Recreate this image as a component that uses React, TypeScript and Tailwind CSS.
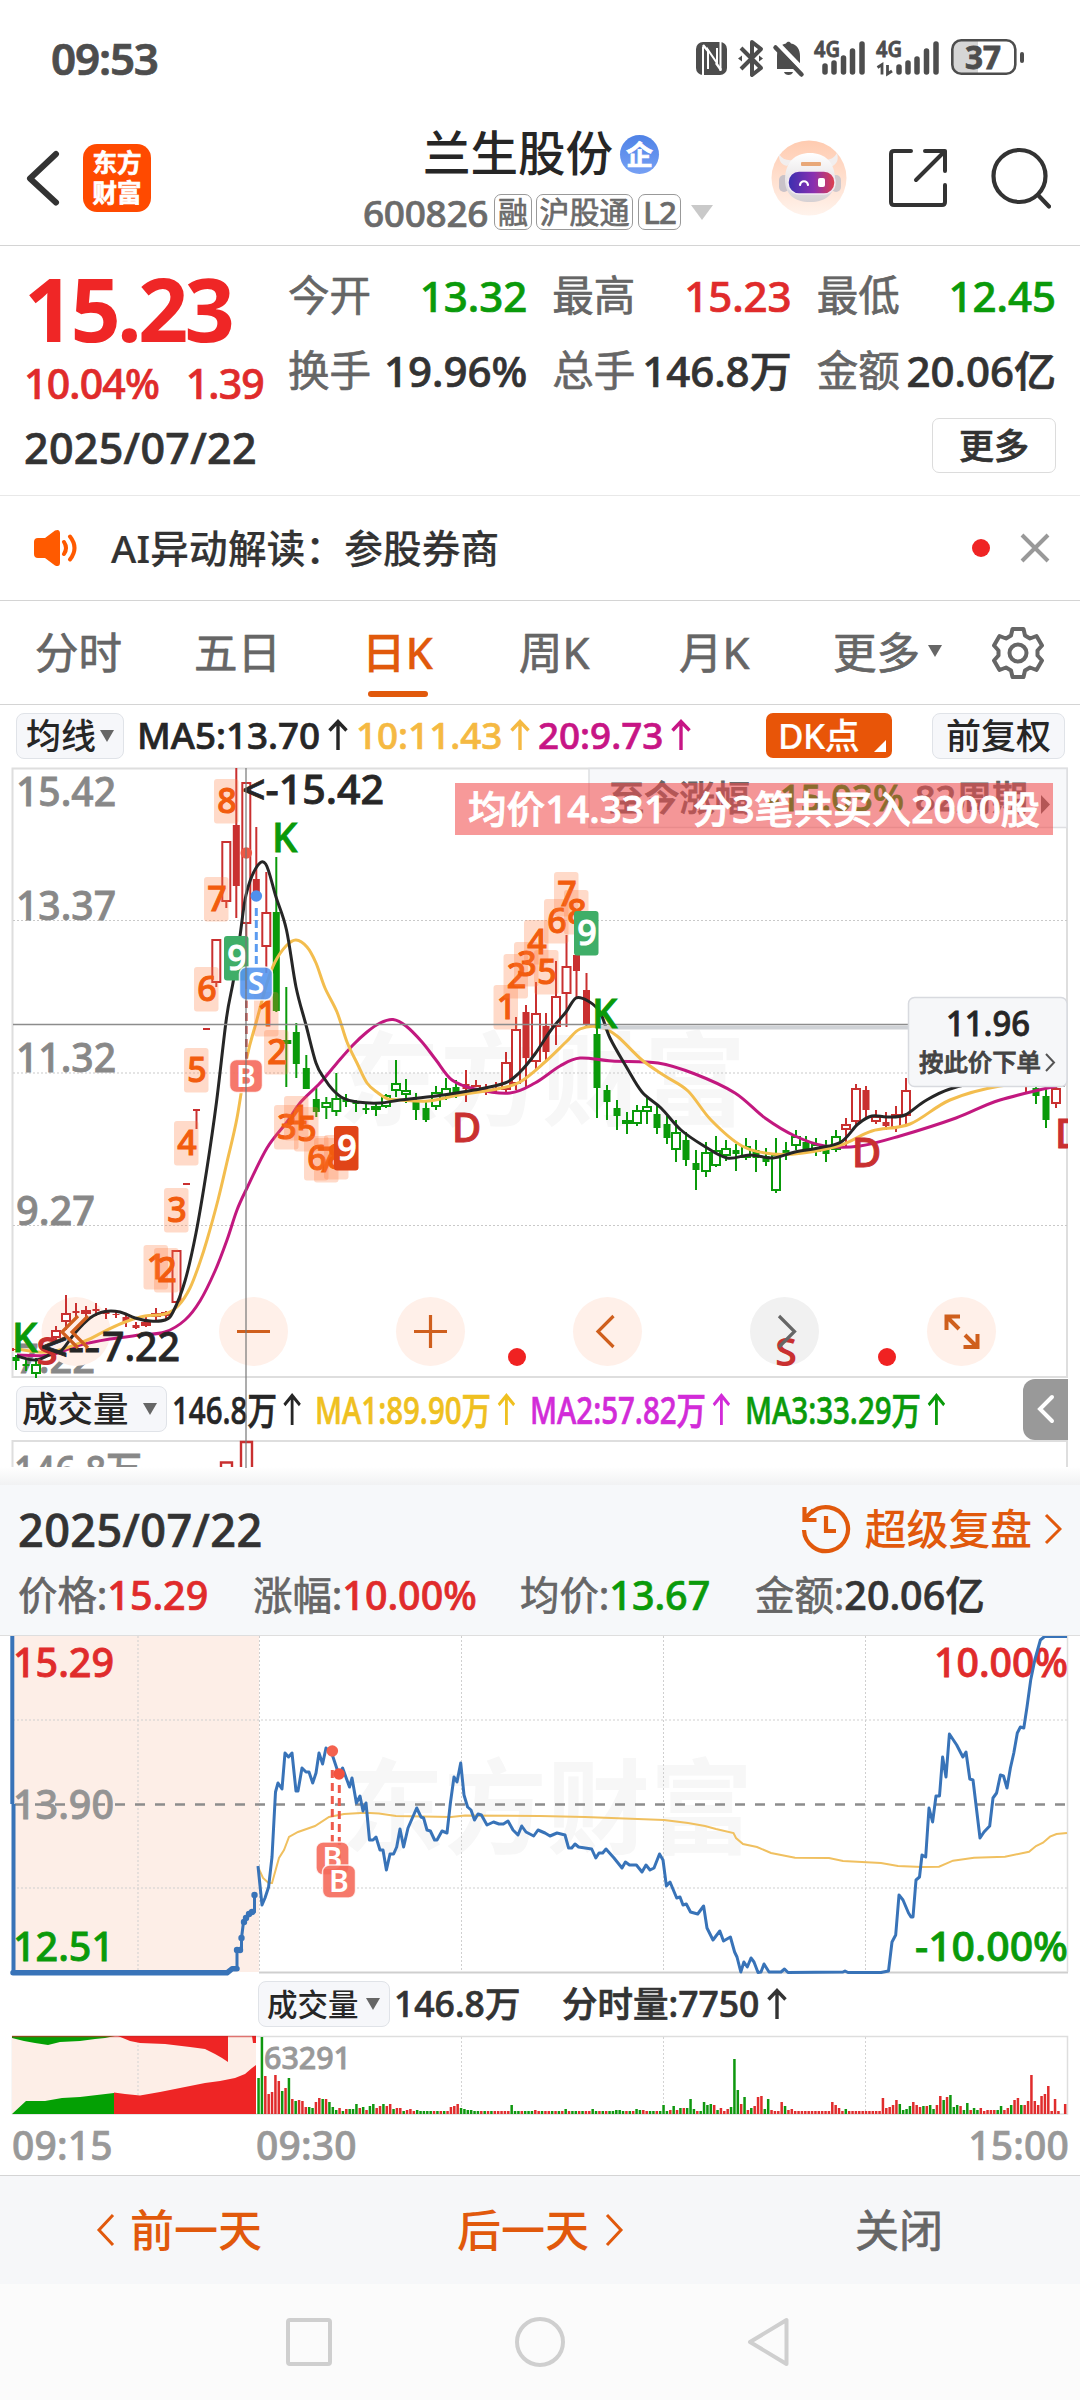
import React from "react";

const RED = "#e02b2b";
const GREEN = "#0a9a0a";
const UP = "#c93030";
const ORANGE = "#e1590c";
const SANS = '"Noto Sans","Noto Sans CJK SC",sans-serif';

type Pt = [number, number];
const path = (pts: Pt[]) => "M" + pts.map((p) => p.join(" ")).join("L");

/* smooth curve through points */
const curve = (p: Pt[]) => {
  let d = `M${p[0][0]} ${p[0][1]}`;
  for (let i = 0; i < p.length - 1; i++) {
    const a = p[i - 1] || p[i], b = p[i], c = p[i + 1], e = p[i + 2] || c;
    d += `C${b[0] + (c[0] - a[0]) / 6} ${b[1] + (c[1] - a[1]) / 6} ${c[0] - (e[0] - b[0]) / 6} ${c[1] - (e[1] - b[1]) / 6} ${c[0]} ${c[1]}`;
  }
  return d;
};

function Txt({ x, y, w, s, fill, children, weight = 500 }: { x: number; y: number; w?: number; s: number; fill: string; children: string; weight?: number }) {
  return (
    <text x={x} y={y} fontSize={s} fill={fill} stroke={fill} strokeWidth="0.800" fontWeight={weight} fontFamily={SANS} textLength={w} lengthAdjust="spacingAndGlyphs" style={{ whiteSpace: "pre" }}>
      {children}
    </text>
  );
}

function Up() {
  return (
    <svg viewBox="0 0 20 32" className="ml-2 h-8 w-5 shrink-0" fill="none" stroke="currentColor" strokeWidth="3.400">
      <path d="M10 31V2M1.500 11.500 10 2.500l8.500 9" />
    </svg>
  );
}

function Caret({ className }: { className?: string }) {
  return (
    <svg viewBox="0 0 14 12" className={"h-3 w-3.5 shrink-0 " + (className || "")}>
      <path d="M0 0h14L7 12z" fill="#666" />
    </svg>
  );
}

function StatusBar() {
  return (
    <div className="flex h-[116px] items-center pr-[50px] pl-[51px] text-[#4d4d4d]">
      <div className="text-[44px] leading-none font-semibold tracking-[-1.200px]">09:53</div>
      <svg viewBox="690 34 340 46" className="ml-auto h-[46px] w-[340px]">
        <rect x="696" y="41" width="31" height="33" rx="7" fill="#4d4d4d" />
        <path d="M703 74V45.500M720.500 70V41M708 68V49l9 13V47" stroke="#fff" strokeWidth="2" fill="none" />
        <path d="M703 44l5 6M716 62l5 7" stroke="#fff" strokeWidth="2.500" />
        <path d="M741 47l20 20-9 7V41l9 7-20 20" fill="none" stroke="#4d4d4d" strokeWidth="4" strokeLinejoin="round" />
        <path d="M738 57.500l4-3v6zM763 57.500l-4-3v6z" fill="#4d4d4d" />
        <path d="M777 66V55c0-7 4-12 9-12.500 1-2.500 4-2.500 5 0 6 1 9 6 9 12.500v8l3 5h-26z" fill="#4d4d4d" />
        <path d="M784 71h9c-1 4-8 4-9 0z" fill="#4d4d4d" />
        <path d="M777 42l28 29" stroke="#fff" strokeWidth="5" />
        <path d="M775.500 46.500l26 27" stroke="#4d4d4d" strokeWidth="4.500" strokeLinecap="round" />
        <Txt x={814} y={56} w={26} s={21} fill="#4d4d4d" weight={600}>4G</Txt>
        <Txt x={876} y={56} w={26} s={21} fill="#4d4d4d" weight={600}>4G</Txt>
        <g stroke="#4d4d4d" strokeWidth="5.500" strokeLinecap="round">
          <path d="M825 65v6M834 62v9M843.500 57v14M852.500 50v21M862 43v28" />
          <path d="M899 66v5M908 62v9M917 58v13M926.500 50v21M936 43v28" />
        </g>
        <path d="M877.500 66.500l4.500-3v10M892 70l-4.500 3V64" fill="none" stroke="#4d4d4d" strokeWidth="2.800" />
        <path d="M978 40h-16q-9 0-9 9v14q0 9 9 9h16z" fill="#d6d6d6" />
        <rect x="952.300" y="39.300" width="63" height="33.500" rx="9" fill="none" stroke="#4d4d4d" strokeWidth="2.600" />
        <rect x="1020" y="51" width="4" height="11" rx="2" fill="#4d4d4d" />
        <Txt x={965} y={68} w={36} s={32} fill="#4d4d4d" weight={700}>37</Txt>
      </svg>
    </div>
  );
}

function Robot() {
  return (
    <svg viewBox="0 0 76 76" className="h-[76px] w-[76px]">
      <defs>
        <linearGradient id="bgp" x1="0" y1="0" x2="0" y2="1"><stop offset="0" stopColor="#ffcbb0" /><stop offset="1" stopColor="#fff3ec" /></linearGradient>
        <linearGradient id="visor" x1="0" y1="0" x2="1" y2="0"><stop offset="0" stopColor="#3a2fb0" /><stop offset=".55" stopColor="#8a2fb0" /><stop offset="1" stopColor="#e0404c" /></linearGradient>
        <linearGradient id="shell" x1="0" y1="0" x2="0" y2="1"><stop offset="0" stopColor="#fff" /><stop offset="1" stopColor="#d5d0d3" /></linearGradient>
      </defs>
      <circle cx="38" cy="38" r="37.500" fill="url(#bgp)" />
      <path d="M8 14c0 6 1 10 8 12l6-6c-6 1-11-1-14-6zM66 13c2 7 0 11-6 14l-6-7c5 0 9-2 12-7z" fill="#f2eeee" />
      <rect x="8" y="35" width="10" height="17" rx="5" fill="#c9c2c8" />
      <rect x="60" y="35" width="10" height="17" rx="5" fill="#cfc8cc" />
      <path d="M14 40c0-18 10-27 25-27s25 9 25 27c0 14-9 22-25 22s-25-8-25-22z" fill="url(#shell)" />
      <rect x="17" y="31" width="47" height="23" rx="11" fill="url(#visor)" stroke="#f2e9f2" strokeWidth="1.500" />
      <path d="M29 45c1-5 7-5 8 0" fill="none" stroke="#fff" strokeWidth="2.200" strokeLinecap="round" />
      <rect x="47" y="38" width="7" height="9" rx="2" fill="#fff" />
      <rect x="30" y="22" width="20" height="4" rx="1" fill="#e8a878" />
    </svg>
  );
}

function Header() {
  return (
    <div className="relative flex h-[130px] items-start border-b border-[#d4d4d4] text-[#262626]">
      <svg viewBox="0 0 34 58" className="mt-[33px] ml-[26px] h-[58px] w-[34px]">
        <path d="M30 5 4 29.500l26 24" fill="none" stroke="#333" strokeWidth="6" strokeLinecap="round" strokeLinejoin="round" />
      </svg>
      <div className="mt-7 ml-[23px] flex h-[68px] w-[68px] flex-col items-center justify-center rounded-[14px] bg-[#ff4a00] text-[24.500px] leading-[30px] font-bold text-white">
        <span>东方</span>
        <span>财富</span>
      </div>
      <div className="absolute left-[362px] flex flex-col items-start">
        <div className="ml-[61px] flex h-[68px] items-center pt-[5px]">
          <span className="text-[47.500px] leading-none font-medium [-webkit-text-stroke:0px]">兰生股份</span>
          <span className="mt-1 ml-[7px] flex size-[39px] items-center justify-center rounded-full bg-linear-to-b from-[#4f82e6] to-[#76a0f4] text-[27px] leading-none font-bold text-white">企</span>
        </div>
        <div className="mt-[10px] flex h-9 items-center pl-px text-[#6b6b6b]">
          <span className="w-[131px] text-[37px] leading-none font-medium tracking-[-0.300px]">600826</span>
          <span className="flex h-9 w-[38px] items-center justify-center rounded-[7px] border border-[#999] text-[30px] leading-none">融</span>
          <span className="ml-1 flex h-9 w-[97px] items-center justify-center rounded-[7px] border border-[#999] text-[30px] leading-none">沪股通</span>
          <span className="ml-[5px] flex h-9 w-[43px] items-center justify-center rounded-[7px] border border-[#999] text-[31px] leading-none font-medium tracking-[-1px]">L2</span>
          <svg viewBox="0 0 22 15" className="ml-[10px] h-[15px] w-[22px]"><path d="M0 0h22L11 15z" fill="#c9c9c9" /></svg>
        </div>
      </div>
      <div className="mt-6 mr-[29px] ml-auto flex h-[76px] items-center">
        <Robot />
        <svg viewBox="0 0 60 60" className="ml-[41px] h-[60px] w-[60px]" fill="none" stroke="#333" strokeWidth="4" strokeLinecap="round" strokeLinejoin="round">
          <path d="M23 3H6Q3 3 3 6v48q0 3 3 3h48q3 0 3-3V37M37 3h20v20M57 3 28 32" />
        </svg>
        <svg viewBox="0 0 60 62" className="ml-[43px] h-[62px] w-[60px]" fill="none" stroke="#333" strokeWidth="4.200" strokeLinecap="round">
          <circle cx="28.500" cy="29" r="26" />
          <path d="M47 48l11 11.500" />
        </svg>
      </div>
    </div>
  );
}

function Cell({ k, v, c = "text-[#333]" }: { k: string; v: string; c?: string }) {
  return (
    <div className="flex h-[50px] items-center justify-between leading-none">
      <span className="text-[41.500px] font-normal text-[#666]">{k}</span>
      <span className={"text-[42px] font-medium " + c}>{v}</span>
    </div>
  );
}

function Quote() {
  return (
    <div className="h-[250px] border-b border-[#e8e8e8] pt-[24px] pr-[24px] pl-[24px]">
      <div className="flex">
        <div className="w-[264px] shrink-0">
          <div className="flex h-[76px] items-center text-[88px] leading-none font-bold tracking-[-3.800px] text-[#ef2626] [-webkit-text-stroke:0px]">15.23</div>
          <div className="flex h-[74px] items-center justify-between pr-[24px] text-[41px] leading-none font-medium tracking-[-0.800px] text-[#e02b2b]">
            <span>10.04%</span>
            <span>1.39</span>
          </div>
        </div>
        <div className="grid flex-1 grid-cols-3 content-start gap-x-[25px] gap-y-[25px] pt-px">
          <Cell k="今开" v="13.32" c="text-[#0a9a0a]" />
          <Cell k="最高" v="15.23" c="text-[#e02b2b]" />
          <Cell k="最低" v="12.45" c="text-[#0a9a0a]" />
          <Cell k="换手" v="19.96%" />
          <Cell k="总手" v="146.8万" />
          <Cell k="金额" v="20.06亿" />
        </div>
      </div>
      <div className="flex h-[54px] items-center justify-between">
        <span className="text-[43px] leading-none font-medium tracking-[0.300px] text-[#333]">2025/07/22</span>
        <span className="mt-[-4px] flex h-[55px] w-[124px] items-center justify-center rounded-[7px] border border-[#dcdcdc] text-[35px] leading-none font-medium text-[#333]">更多</span>
      </div>
    </div>
  );
}

function Notice() {
  return (
    <div className="flex h-[105px] items-center border-b border-[#d4d4d4] pr-[30px] pl-[33px]">
      <svg viewBox="0 0 46 38" className="h-[38px] w-[46px]">
        <path d="M5 9h7L22 1.500q5-2 5 3v29q0 5-5 3L12 29H5q-4 0-4-4V13q0-4 4-4z" fill="#ff5a00" />
        <path d="M31 13q4 6 0 12M37 7.500q9 11.500 0 23" fill="none" stroke="#ff5a00" strokeWidth="4" strokeLinecap="round" />
      </svg>
      <span className="ml-8 text-[38.600px] leading-none font-medium tracking-[0.200px] text-[#333] [-webkit-text-stroke:0.200px]">AI异动解读：参股券商</span>
      <span className="ml-auto size-[18px] rounded-full bg-[#ef2424]" />
      <svg viewBox="0 0 30 30" className="ml-[30px] h-[30px] w-[30px]"><path d="M2 2l26 26M28 2 2 28" stroke="#999" strokeWidth="4" /></svg>
    </div>
  );
}

function Tabs() {
  return (
    <div className="relative flex h-[104px] items-center border-b border-[#d4d4d4] text-[43.500px] leading-none text-[#666]">
      <span className="ml-[35px] w-[159px]">分时</span>
      <span className="w-[168px]">五日</span>
      <span className="w-[157px] font-medium text-[#e1590c] [-webkit-text-stroke:0.300px]">日K</span>
      <span className="w-[160px]">周K</span>
      <span className="w-[154px]">月K</span>
      <span>更多</span>
      <Caret className="-mt-1 ml-[8px]" />
      <svg viewBox="0 0 54 54" className="ml-[49px] h-[54px] w-[54px]" fill="none" stroke="#666" strokeWidth="4" strokeLinejoin="round">
        <path d="M21.500 3h11l1.500 6.500 5 3 6.500-2.500 5.500 9.500-4.500 5v5l4.500 5-5.500 9.500L39 41.500l-5 3L32.500 51h-11L20 44.500l-5-3L8.500 44 3 34.500l4.500-5v-5L3 19.500 8.500 10l6.500 2.500 5-3z" />
        <circle cx="27" cy="27" r="8.500" />
      </svg>
      <span className="absolute bottom-[7px] left-[368px] h-[6px] w-[60px] rounded-full bg-[#e1590c]" />
    </div>
  );
}

function IndicatorRow() {
  return (
    <div className="flex h-[61px] items-center pl-4 text-[36.800px] leading-none font-medium text-[#262626]">
      <span className="flex h-[46px] w-[108px] items-center rounded-[8px] border border-[#e0e3e8] bg-[#f6f7fa] pl-[9px] text-[35px] [-webkit-text-stroke:0px]">
        均线<Caret className="ml-[4px]" />
      </span>
      <span className="ml-[13px] flex w-[219px] items-center">MA5:13.70<Up /></span>
      <span className="flex w-[182px] items-center text-[#f5b942]">10:11.43<Up /></span>
      <span className="flex w-[228px] items-center text-[#c71585]">20:9.73<Up /></span>
      <span className="relative flex h-[45px] w-[126px] items-center rounded-[7px] bg-[#e85508] pl-[12px] text-[35px] tracking-[-0.500px] text-white [-webkit-text-stroke:0.200px]">
        DK点
        <svg viewBox="0 0 12 12" className="absolute right-[6px] bottom-[6px] size-3"><path d="M12 0v12H0z" fill="#fff" /></svg>
      </span>
      <span className="ml-[40px] flex h-[46px] w-[133px] items-center justify-center rounded-[8px] border border-[#e0e3e8] bg-[#f6f7fa] text-[35px] [-webkit-text-stroke:0px]">前复权</span>
    </div>
  );
}

/* kind: h = hollow, f = filled, colour r / g; [x, high, top, bottom, low, kind] */
type Candle = [number, number, number, number, number, string];
const candles: Candle[] = [
  [13, 1348, 1349, 1350, 1351, "fr"], [16, 1355, 1357, 1361, 1370, "fg"], [26, 1360, 1364, 1366, 1371, "fg"], [36, 1358, 1364, 1374, 1378, "hg"],
  [56, 1326, 1330, 1338, 1342, "hr"], [66, 1295, 1313, 1322, 1330, "hr"], [76, 1303, 1311, 1313, 1318, "fr"], [86, 1306, 1310, 1314, 1320, "hr"],
  [96, 1303, 1309, 1311, 1316, "fr"], [106, 1308, 1312, 1314, 1319, "fr"], [116, 1312, 1314, 1315, 1318, "fr"], [126, 1315, 1317, 1322, 1327, "fr"],
  [136, 1322, 1325, 1328, 1329, "fr"], [146, 1317, 1322, 1326, 1327, "hr"], [156, 1308, 1313, 1317, 1322, "hr"], [166, 1311, 1312, 1316, 1319, "hr"],
  [176.500, 1250, 1250, 1303, 1303, "hr"], [186.500, 1183, 1183, 1185, 1185, "fr"], [196.500, 1109, 1109, 1111, 1129, "fr"], [206.500, 1028, 1028, 1030, 1030, "fr"],
  [216.300, 939, 939, 983, 987, "hr"], [226.300, 841, 841, 902, 908, "hr"], [236.300, 768, 825, 886, 918, "fr"], [246.300, 782, 782, 924, 989, "hr"],
  [256.300, 827, 879, 896, 897, "fr"], [266.300, 872, 912, 947, 973, "hr"], [276.300, 857, 912, 1011, 1012, "fg"], [286.300, 987, 1040, 1044, 1087, "hg"],
  [296.300, 1023, 1032, 1064, 1078, "fg"], [306.300, 1055, 1068, 1089, 1089, "fg"], [316.300, 1088, 1099, 1112, 1117, "fg"], [326.300, 1097, 1102, 1108, 1119, "hg"],
  [336.300, 1073, 1098, 1112, 1116, "hg"], [346, 1094, 1099, 1102, 1107, "fg"], [356, 1100, 1102, 1104, 1112, "fg"], [366, 1104, 1108, 1110, 1114, "fg"],
  [376, 1104, 1106, 1110, 1116, "hg"], [386, 1094, 1095, 1107, 1108, "hg"], [396, 1060, 1083, 1091, 1097, "hg"],
  [406, 1079, 1090, 1095, 1103, "hg"], [416, 1093, 1102, 1110, 1120, "fg"], [426, 1102, 1108, 1120, 1122, "fg"], [436, 1086, 1092, 1107, 1110, "hg"],
  [446, 1078, 1088, 1096, 1100, "hg"], [456, 1080, 1087, 1094, 1098, "fg"], [466, 1070, 1084, 1089, 1102, "fr"], [476, 1080, 1085, 1091, 1093, "hr"],
  [486, 1084, 1089, 1091, 1095, "fr"], [496, 1082, 1088, 1090, 1094, "fr"], [506, 1052, 1062, 1090, 1094, "hr"], [516, 1017, 1029, 1084, 1090, "hr"],
  [526, 1005, 1012, 1058, 1088, "fr"], [536, 982, 1013, 1062, 1070, "hr"], [546, 1013, 1026, 1052, 1060, "fr"], [556, 961, 996, 1027, 1045, "hr"],
  [566.500, 935, 966, 994, 1027, "hr"], [576.500, 950, 955, 971, 998, "fr"], [586.500, 973, 990, 1025, 1026, "fr"], [597, 1028, 1034, 1088, 1118, "fg"],
  [607, 1085, 1090, 1102, 1120, "fg"], [617, 1100, 1108, 1116, 1130, "fg"], [627, 1112, 1120, 1124, 1134, "hg"], [637, 1105, 1110, 1124, 1126, "hg"],
  [647, 1098, 1106, 1112, 1124, "hg"], [657, 1106, 1114, 1128, 1134, "fg"], [667, 1116, 1124, 1138, 1144, "fg"], [676, 1120, 1132, 1150, 1162, "hg"],
  [686, 1132, 1140, 1160, 1166, "fg"], [696, 1150, 1163, 1170, 1190, "fg"], [706, 1142, 1152, 1172, 1177, "hg"], [716, 1136, 1150, 1166, 1167, "hg"],
  [726, 1140, 1148, 1156, 1161, "hg"], [736, 1144, 1150, 1154, 1171, "fg"], [746, 1138, 1146, 1158, 1160, "hg"], [756, 1140, 1150, 1158, 1172, "fg"],
  [766, 1148, 1156, 1162, 1166, "fg"], [776, 1138, 1154, 1191, 1193, "hg"], [786, 1142, 1150, 1153, 1160, "fg"], [796, 1130, 1136, 1146, 1150, "hg"],
  [806, 1136, 1142, 1150, 1154, "fg"], [816, 1138, 1144, 1152, 1156, "hg"], [826, 1140, 1148, 1154, 1162, "fg"], [836, 1130, 1136, 1150, 1152, "hg"],
  [846, 1118, 1124, 1130, 1148, "hr"], [856, 1084, 1088, 1122, 1126, "hr"], [866, 1086, 1090, 1110, 1118, "fr"], [876, 1110, 1116, 1122, 1124, "hr"],
  [886, 1112, 1122, 1126, 1130, "fr"], [896, 1106, 1114, 1128, 1132, "hr"], [906, 1078, 1090, 1116, 1124, "hr"],
  [1026, 1070, 1076, 1084, 1092, "hr"], [1036, 1084, 1088, 1096, 1104, "fg"], [1046, 1082, 1096, 1120, 1128, "fg"], [1056, 1080, 1088, 1104, 1108, "hr"],
];

const tags: [string, number, number, string?][] = [
  ["8", 214, 779], ["7", 204, 877], ["6", 194, 967], ["5", 184, 1048], ["4", 174, 1121], ["3", 164, 1188], ["1", 143.500, 1245], ["2", 154, 1248],
  ["1", 254, 992], ["2", 264, 1030], ["3", 274, 1105], ["4", 284, 1096], ["5", 294, 1107], ["6", 304, 1136], ["7", 314, 1138], ["8", 324, 1135], ["9", 334, 1126, "#e04418"],
  ["1", 493.500, 985], ["2", 503.500, 954], ["3", 514, 942], ["4", 524, 920], ["5", 534, 950], ["6", 544, 899], ["7", 554, 872], ["8", 564, 890], ["9", 574, 911, "#3fae68"],
  ["9", 224, 936, "#3fae68"],
];

const maBlack: Pt[] = [[17, 1356], [36, 1360], [55, 1352], [62, 1350], [75, 1333], [90, 1318], [105, 1311.500], [120, 1312], [135, 1318], [150, 1321], [165, 1320], [173, 1312], [185, 1281], [196, 1233], [206.700, 1170], [216.500, 1102], [226.500, 1018], [233.500, 980], [240, 936], [246, 895], [256, 868], [265.700, 864], [276, 897], [286.500, 930], [296, 987], [306, 1025], [316, 1063], [324, 1078], [333, 1090], [343, 1098], [357, 1102], [380, 1103], [400, 1100], [436, 1096], [474, 1090], [505, 1083], [520, 1072], [535, 1054], [551, 1030], [566, 1012], [576, 998], [588, 1001], [600, 1012], [610, 1038], [627, 1068], [642, 1092], [661, 1108], [681, 1130], [704, 1146], [727, 1158], [750, 1155], [773, 1158], [795, 1152], [818, 1148], [841, 1142], [858, 1124], [872, 1116], [887, 1117], [905, 1115], [925, 1101], [950, 1089], [990, 1080], [1030, 1078], [1065, 1085]];
const maYellow: Pt[] = [[17, 1349], [50, 1352], [85, 1341], [105, 1331], [125, 1322], [145, 1316], [165, 1314], [178, 1306], [190, 1288], [200, 1262], [207, 1240], [218, 1200], [227, 1162], [237, 1118], [247, 1057], [256, 1023], [267, 983], [275, 962], [286, 946], [296, 940], [307, 947], [316, 963], [325, 988], [337, 1012], [347, 1042], [357, 1063], [367, 1083], [378, 1093], [388, 1099], [400, 1100], [428, 1101], [459, 1095], [497, 1089], [520, 1082], [545, 1062], [566, 1042], [580, 1029], [600, 1027], [617, 1036], [642, 1060], [665, 1076], [688, 1091], [711, 1120], [742, 1146], [773, 1154], [803, 1153], [841, 1145], [872, 1131], [910, 1124], [950, 1100], [1000, 1086], [1065, 1080]];
const maPurple: Pt[] = [[17, 1355], [50, 1355], [80, 1345], [110, 1339], [140, 1335], [165, 1332], [185, 1320], [200, 1301], [215, 1271], [227, 1240], [237, 1210], [247, 1188], [267, 1148], [287, 1122], [300, 1103], [320, 1083], [337, 1063], [353, 1045], [367, 1032], [380, 1023], [393, 1019.500], [406, 1026], [422, 1042], [436, 1060], [452, 1080], [475, 1089], [510, 1093], [535, 1083], [560, 1066], [580, 1058], [612, 1061], [658, 1063], [695, 1074], [735, 1093], [765, 1118], [795, 1136], [825, 1146], [860, 1146], [900, 1136], [956, 1118], [1000, 1100], [1065, 1084]];

function Badge({ x, y, t, c }: { x: number; y: number; t: string; c: string }) {
  return (
    <g>
      <rect x={x} y={y} width="33" height="33" rx="7" fill={c} fillOpacity=".9" stroke="#fff" strokeOpacity=".8" strokeWidth="1.500" />
      <text x={x + 16.500} y={y + 27} textAnchor="middle" fontFamily={SANS} fontSize="30" fontWeight="600" fill="#fff">{t}</text>
    </g>
  );
}

function BtnIcon({ children, gray }: { gray?: boolean; children: React.ReactNode }) {
  return <g fill="none" stroke={gray ? "#666" : "#cf5f1d"} strokeWidth="3.200">{children}</g>;
}

function KChart() {
  return (
    <svg viewBox="0 767 1080 611" className="block h-[611px] w-[1080px]">
      <clipPath id="kc"><rect x="12" y="767" width="1056" height="611" /></clipPath>
      <text x="338" y="1118" fontFamily={SANS} fontSize="102" fontWeight="700" fill="#f7f7f7">东方财富</text>
      <path d="M12.500 1377V768.500H1067V1377z" fill="none" stroke="#dedede" strokeWidth="2" />
      <path d="M13 920.500H1067M13 1073H1067M13 1225.500H1067" stroke="#c9c9c9" strokeWidth="1" strokeDasharray="2 2" />
      {[["15.42", 805.500, 97], ["13.37", 919.500, 97], ["11.32", 1072, 97], ["9.27", 1224.500, 76], ["7.22", 1373, 76]].map(([t, y, w]) => (
        <Txt key={t} x={16} y={y as number} w={(w as number) + 3} s={40} fill="#888">{t as string}</Txt>
      ))}
      {[76, 253.500, 430.500, 607.500, 784.500, 961.500].map((cx) => (
        <circle key={cx} cx={cx} cy="1331.500" r="34.500" fill={cx === 784.500 ? "#f1f1f1" : "#fff0e9"} />
      ))}
      <g clipPath="url(#kc)">
        {candles.map(([x, h, t, b, l, k], i) => {
          const c = k[1] === "r" ? UP : GREEN;
          return (
            <g key={i} stroke={c} strokeWidth="2">
              <path d={`M${x} ${h}V${t}M${x} ${b}V${l}`} />
              {k[0] === "h" ? <rect x={x - 4} y={t + 1} width="8" height={Math.max(b - t - 2, 2)} fill="#fff" /> : <rect x={x - 3.500} y={t} width="7" height={b - t} fill={c} stroke="none" />}
            </g>
          );
        })}
        <path d={curve(maPurple)} fill="none" stroke="#c2187f" strokeWidth="3" />
        <path d={curve(maYellow)} fill="none" stroke="#f3bd4e" strokeWidth="3" />
        <path d={curve(maBlack)} fill="none" stroke="#262626" strokeWidth="3" />
      </g>
      {tags.map(([t, x, y, c], i) => (
        <g key={i}>
          <rect x={x} y={y} width="24.500" height="44.500" rx="3" fill={c || "#ff7a3c"} fillOpacity={c ? 1 : 0.28} />
          <text x={x + 13} y={y + 34} textAnchor="middle" fontFamily={SANS} fontSize="34" fontWeight="500" fill={c ? "#fff" : "#f25c0e"} stroke={c ? "#fff" : "#f25c0e"}>{t}</text>
        </g>
      ))}
      <path d="M246.300 1000V1060" stroke="#c8433c" strokeWidth="2.600" strokeDasharray="8 5" />
      <circle cx="246.300" cy="853" r="5.800" fill="#ec5745" />
      <path d="M256.300 908V967" stroke="#5a9bf0" strokeWidth="3" strokeDasharray="8 4" />
      <circle cx="256.300" cy="896" r="5.800" fill="#4f90ee" />
      <path d="M13 1024.500H908" stroke="#8c8c8c" strokeWidth="1.500" />
      <path d="M600 1027.500H908" stroke="#cfd2d6" strokeWidth="4" />
      <Badge x={229.500} y={1059.500} t="B" c="#f5695b" />
      <Badge x={239.500} y={967} t="S" c="#5596ee" />
      <Txt x={242} y={804} w={142} s={40} fill="#262626">{"<-15.42"}</Txt>
      <g fontFamily={SANS} fontWeight="500" fontSize="40">
        <text x="272" y="852" fill={GREEN} stroke={GREEN}>K</text>
        <text x="592" y="1028" fill={GREEN} stroke={GREEN}>K</text>
        <text x="12" y="1352" fill={GREEN} stroke={GREEN}>K</text>
        <text x="452" y="1142" fill={UP} stroke={UP}>D</text>
        <text x="852" y="1167" fill={UP} stroke={UP}>D</text>
        <text x="1055" y="1148" fill={UP} stroke={UP} clipPath="url(#kc)">D</text>
        <text x="36" y="1365" fill={UP} fontWeight="600">S</text>
      </g>
      <Txt x={40} y={1361} w={60} s={40} fill="#262626">{"<--"}</Txt>
      <Txt x={102} y={1361} w={78} s={40} fill="#262626">7.22</Txt>
      <BtnIcon><path d="M78 1316l-16 16 16 16M88 1316l-16 16 16 16" /></BtnIcon>
      <BtnIcon><path d="M237 1331.500h33" /></BtnIcon>
      <BtnIcon><path d="M414 1331.500h33M430.500 1315v33" /></BtnIcon>
      <BtnIcon><path d="M613.500 1316l-15.500 15.500 15.500 15.500" /></BtnIcon>
      <text x="775" y="1366" fontFamily={SANS} fontWeight="600" fontSize="40" fill={UP}>S</text>
      <BtnIcon gray><path d="M779 1316l15.500 15.500-15.500 15.500" /></BtnIcon>
      <BtnIcon><path d="M946.500 1330v-13.500H960M947 1317l12 12M977.500 1334v13H963.500M977 1347l-12-12" strokeWidth="4" /></BtnIcon>
      <circle cx="517" cy="1357" r="9" fill="#f02222" />
      <circle cx="887" cy="1357" r="9" fill="#f02222" />
      <rect x="589" y="768.500" width="478" height="59" fill="#f7f8fa" stroke="#dedfe2" strokeWidth="1.500" />
      <Txt x={609} y={811} w={141} s={35} fill="#666">至今涨幅</Txt>
      <Txt x={768} y={811} w={136} s={37} fill={GREEN}>-15.03%</Txt>
      <Txt x={915} y={811} w={113} s={35} fill="#666">82周期</Txt>
      <path d="M1041 795v19l9-9.500z" fill="#666" />
      <rect x="455" y="783" width="598" height="52" fill="#f04a4a" fillOpacity=".56" />
      <Txt x={468} y={823} w={198} s={38} fill="#fff">均价14.331</Txt>
      <Txt x={693} y={823} w={347} s={38} fill="#fff">分3笔共买入2000股</Txt>
      <rect x="908.500" y="997.500" width="158.500" height="89" rx="6" fill="#f6f7f9" stroke="#d8dadf" strokeWidth="1.500" />
      <Txt x={946} y={1036} w={84} s={34} fill="#262626">11.96</Txt>
      <Txt x={919} y={1071} w={122} s={24} fill="#444">按此价下单</Txt>
      <path d="M1046 1054l8 8.500-8 8.500" fill="none" stroke="#555" strokeWidth="2" />
    </svg>
  );
}

function VolLabel({ t, w, className }: { t: string; w: string; className: string }) {
  return (
    <span className={"flex h-[40px] items-center " + w + " " + className}>
      <span className="inline-flex origin-left scale-x-[0.775] items-center whitespace-nowrap">
        {t}
        <svg viewBox="0 0 24 32" className="ml-2 h-8 w-[24px] shrink-0" fill="none" stroke="currentColor" strokeWidth="3.600">
          <path d="M12 32V2M2 12 12 2.500 22 12" />
        </svg>
      </span>
    </span>
  );
}

function VolumeSection() {
  return (
    <div>
      <div className="flex h-[62px] items-center text-[38px] leading-none font-medium text-[#262626]">
        <span className="ml-4 flex h-[46px] w-[151px] shrink-0 items-center justify-between rounded-[8px] border border-[#e0e3e8] bg-[#f6f7fa] pr-[9px] pl-[5px] text-[35.500px] [-webkit-text-stroke:0px]">
          成交量<Caret />
        </span>
        <VolLabel t="146.8万" w="ml-[5px] w-[143px] shrink-0" className="" />
        <VolLabel t="MA1:89.90万" w="w-[215px] shrink-0" className="text-[#efc020]" />
        <VolLabel t="MA2:57.82万" w="w-[215px] shrink-0" className="text-[#d22bd8]" />
        <VolLabel t="MA3:33.29万" w="w-[215px] shrink-0" className="text-[#0a9a0a]" />
        <span className="mr-3 ml-auto flex h-[61px] w-[45px] shrink-0 items-center justify-center rounded-l-[12px] bg-[#999]">
          <svg viewBox="0 0 18 30" className="h-[30px] w-[18px]"><path d="M15 3 3 15l12 12" fill="none" stroke="#fff" strokeWidth="4" strokeLinecap="round" /></svg>
        </span>
      </div>
      <svg viewBox="0 1440 1080 27" className="block h-[27px] w-[1080px]">
        <path d="M12.500 1467V1441H1067V1467" fill="none" stroke="#dedede" strokeWidth="2" />
        <Txt x={14} y={1485} w={128} s={40} fill="#888">146.8万</Txt>
        <path d="M221 1470v-7.500h11v7.500M241 1470v-28h11v28" fill="none" stroke={UP} strokeWidth="2.400" />
      </svg>
      <div className="h-[18px] bg-linear-to-b from-white to-[#f1f2f3]" />
    </div>
  );
}

function PanelHead() {
  return (
    <div className="h-[151px] border-b border-[#dedede] bg-[#f6f8fa] pr-[18px] pl-[18px]">
      <div className="flex h-[88px] items-center">
        <span className="text-[45px] leading-none font-medium tracking-[0.400px] text-[#333]">2025/07/22</span>
        <svg viewBox="0 0 50 50" className="ml-auto h-[50px] w-[50px]" fill="none" stroke={ORANGE} strokeWidth="4.200">
          <path d="M3 26a22 22 0 1 0 7-17" />
          <path d="M3.500 3v13h12M3.500 15l9-9" />
          <path d="M25 12v15h10" />
        </svg>
        <span className="ml-[14px] text-[41.800px] leading-none font-medium text-[#e1590c] [-webkit-text-stroke:0px]">超级复盘</span>
        <svg viewBox="0 0 18 32" className="ml-[12px] h-8 w-[18px]"><path d="M2 2l14 14L2 30" fill="none" stroke={ORANGE} strokeWidth="3" /></svg>
      </div>
      <div className="flex h-[46px] items-center text-[39.400px] leading-none font-medium text-[#666]">
        <span className="w-[235px]"><span className="font-normal">价格:</span><span className="text-[#e02b2b]">15.29</span></span>
        <span className="w-[267px]"><span className="font-normal">涨幅:</span><span className="text-[#e02b2b]">10.00%</span></span>
        <span className="w-[235px]"><span className="font-normal">均价:</span><span className="text-[#0a9a0a]">13.67</span></span>
        <span><span className="font-normal">金额:</span><span className="text-[#333]">20.06亿</span></span>
      </div>
    </div>
  );
}

const price: Pt[] = [[258, 1866], [262, 1905], [265, 1898], [268.600, 1887], [272, 1857], [275.500, 1792], [278, 1783], [282, 1789], [285, 1753], [288.500, 1757], [292, 1753], [296, 1791], [298, 1791], [302, 1768], [306, 1772], [309, 1772], [312.700, 1783], [316, 1773], [319, 1753], [322.600, 1764], [326, 1748], [332, 1754], [339, 1775], [342.600, 1768], [349.500, 1787], [352, 1778], [356.400, 1803], [360, 1796], [363, 1811], [366, 1803], [369.500, 1840], [373, 1840], [376, 1837], [380, 1850], [383, 1850], [386.400, 1870], [390, 1854], [393.600, 1854], [396.700, 1847], [400, 1829], [403.600, 1847], [408, 1828], [416.700, 1808], [421, 1817], [423.600, 1818], [427, 1830], [430.400, 1831], [434.600, 1840], [437, 1840], [442, 1831], [447, 1833], [450.400, 1803], [454, 1777], [457, 1782], [460.700, 1763], [464, 1795], [467.600, 1807], [471, 1810], [474.500, 1820], [478, 1814], [481.400, 1815], [487, 1825], [493.500, 1822], [499, 1824], [503.400, 1824], [508, 1821], [513, 1830], [518, 1835], [521.700, 1826], [526, 1832], [533.700, 1836], [538, 1830], [545, 1833], [550, 1836], [557, 1833], [565, 1835], [568.600, 1848], [571.700, 1848], [575, 1844], [578.600, 1847], [591.700, 1849], [595.800, 1858], [599, 1853], [602.700, 1853], [606, 1849], [614, 1858], [622, 1868], [625.400, 1862], [629.500, 1865], [636.400, 1865], [642, 1872], [646, 1865], [650, 1870], [654, 1868], [659.500, 1854], [663, 1860], [666.400, 1886], [670, 1882], [676.700, 1898], [680, 1897], [683, 1905], [686.300, 1904], [690.500, 1912], [697.700, 1914], [703.600, 1906], [707, 1928], [713, 1940], [719.800, 1931], [723.500, 1941], [730.400, 1937], [734.600, 1952], [737, 1957], [740.800, 1972], [743.900, 1962], [747.300, 1967], [751, 1958], [754, 1962], [758, 1972.500], [761, 1972], [764, 1964], [769, 1972], [781, 1972], [784.500, 1969], [788, 1972.500], [843, 1972], [845, 1971], [848, 1972.500], [881, 1972.500], [888.500, 1971], [892, 1942], [895.700, 1935], [899, 1895], [903, 1900], [908.500, 1913], [911, 1917], [913, 1917], [916, 1880], [919.500, 1877], [922, 1855], [925.700, 1857], [929, 1808], [932.600, 1822], [936, 1796], [939.500, 1796], [942.600, 1757], [946, 1777], [949.400, 1734], [956.700, 1745], [962.900, 1757], [966, 1752], [969.800, 1779], [973, 1780], [980, 1838], [984, 1832], [989.700, 1826], [993, 1798], [996.600, 1793], [1000.400, 1775], [1003.500, 1776], [1007, 1788], [1010.400, 1768], [1013.800, 1753], [1017.300, 1733], [1020.400, 1727], [1023.800, 1728], [1027, 1707], [1030.700, 1680], [1034.800, 1660], [1040.400, 1640], [1044.500, 1636.500], [1067, 1636.500]];
const avg: Pt[] = [[258, 1867], [263, 1878], [268.600, 1883], [272, 1883], [279, 1858], [284, 1850], [289, 1837], [298, 1832], [315, 1826], [329, 1817], [344, 1814], [365, 1812.700], [379, 1813.500], [396, 1816], [451, 1817], [465, 1815.500], [540, 1816], [585, 1817], [664, 1820], [688, 1823], [705, 1826], [716, 1829], [733.500, 1833], [736, 1838], [743, 1844], [757, 1847], [771, 1853], [795, 1857.700], [829, 1858], [843, 1861], [881, 1863], [898, 1866], [922, 1867], [939, 1866.700], [953, 1860.700], [974, 1857.700], [1005, 1856.700], [1029, 1851.700], [1036, 1846], [1043, 1842.700], [1050, 1836.700], [1056.500, 1834], [1067, 1833]];

function MinuteChart() {
  return (
    <svg viewBox="0 1636 1080 341" className="block h-[341px] w-[1080px]">
      <text x="341" y="1846" fontFamily={SANS} fontSize="103" fontWeight="700" fill="#f7f7f7">东方财富</text>
      <rect x="12" y="1636" width="247" height="336" fill="#fdeee7" />
      <path d="M13 1720H1067M13 1888H1067M138 1636V1972M259.500 1636V1972M461.500 1636V1972M663.500 1636V1972M865.500 1636V1972" stroke="#cfcfcf" strokeWidth="1" strokeDasharray="2 2" />
      <path d="M259 1972.500H1068" stroke="#cfcfcf" strokeWidth="2" />
      <path d="M1067.500 1636V1972" stroke="#dedede" strokeWidth="1.500" />
      <path d="M15 1804.500H1067" stroke="#8c8c8c" strokeWidth="2.400" strokeDasharray="10 10" />
      <Txt x={13} y={1677} w={101} s={40} fill={RED}>15.29</Txt>
      <Txt x={13} y={1819} w={101} s={40} fill="#949494">13.90</Txt>
      <Txt x={13} y={1961} w={101} s={40} fill={GREEN}>12.51</Txt>
      <Txt x={934} y={1677} w={134} s={40} fill={RED}>10.00%</Txt>
      <Txt x={915} y={1961} w={153} s={40} fill={GREEN}>-10.00%</Txt>
      <path d={path(avg)} fill="none" stroke="#f0c060" strokeWidth="2" />
      <g fill="none" stroke="#3873b8" strokeLinejoin="round">
        <path d={path(price)} strokeWidth="3" />
        <path d="M12.300 1636V1804M13.500 1804V1973" strokeWidth="4" />
        <path d="M13 1972.800H227l5-4h5" strokeWidth="5.500" strokeLinecap="round" />
        <path d="M237 1968v-18h4.500v-12l2-16 3-4 5-5 3-1v-17" strokeWidth="3" />
      </g>
      <g fill="#3873b8">
        {([[237, 1950], [240, 1950], [241.500, 1938], [244, 1922], [246, 1918], [249, 1914], [252, 1912], [254.500, 1895]] as Pt[]).map(([x, y]) => <circle key={x} cx={x} cy={y} r="3.200" />)}
      </g>
      <path d="M332.300 1770V1842M339.300 1785V1866" stroke="#ee5a4c" strokeWidth="3" strokeDasharray="8 5" />
      <circle cx="332.300" cy="1751" r="5.800" fill="#f4624f" />
      <circle cx="339" cy="1774" r="5.800" fill="#f4523f" />
      <Badge x={316} y={1842} t="B" c="#f56a5b" />
      <Badge x={322.500} y={1865} t="B" c="#f56a5b" />
    </svg>
  );
}

/* minute volume: positive = up minute, negative = down minute, 0 = negligible */
const vol: number[] = [-36, -77, 38, 20, 22, 39, 33, -23, 26, -36, 15, -13, 14, 13, 7, -7, -6, 12, 16, -15, 15, -12, -7, -4, 6, -3, 5, -5, -5, -10, 6, -7, 4, -8, -10, 6, 8, -10, 8, 10, -5, 6, 6, -3, 4, 5, 3, -4, -3, -3, -3, -3, 3, -3, 3, -3, 3, 7, 8, 10, -6, -5, -4, -4, -3, -3, 3, -3, 3, -3, 3, 3, 3, 3, 3, -9, -3, -3, 3, -3, -3, -3, 4, 3, -3, 3, 3, -3, 3, -3, 3, -5, 3, -3, -3, 3, -3, 3, 3, -5, -3, 3, -3, 3, -3, -3, -4, -4, -3, 3, -3, 3, -5, -4, 4, 3, -3, -3, 3, -3, -9, -3, 4, -8, 4, -6, 6, -6, -15, -5, 3, -3, -12, -9, -10, 9, -4, 6, 3, 5, -7, -55, -24, 10, -17, 4, -6, 8, 17, 18, -5, -15, 4, 3, 3, 12, -8, 4, 5, 3, 3, 3, 3, 3, 3, 3, 3, 3, 3, 3, 12, 9, 6, 3, -5, 3, 3, 3, 3, 3, 3, 3, 3, 3, 3, 16, 6, 7, 9, 14, -10, -4, -5, -8, 12, 9, 7, -8, 8, -9, -5, 9, 18, -14, 17, -19, -7, -9, 8, -4, -11, 4, -6, -4, 6, 3, 4, 4, 4, -4, -8, 4, 6, -9, 14, 16, -9, 9, 13, 39, 13, 9, 18, 20, 28, 3, 15, 3, 0, 10];

function MinuteVolume() {
  return (
    <svg viewBox="0 2035 1080 81" className="block h-[81px] w-[1080px]">
      <path d="M12.500 2114V2036.500H1067.500V2114z" fill="#fff" stroke="#dedede" strokeWidth="1.500" />
      <rect x="12" y="2036" width="244" height="78" fill="#fdeee7" />
      <path d="M138 2037V2113M461.500 2037V2113M663.500 2037V2113M865.500 2037V2113" stroke="#d3d3d3" strokeWidth="1" strokeDasharray="2 2" />
      <path d="M12 2036v2l12 3 11 2 13 2 12-3 20-1 15-2 10-1 10-2zM12 2114l14-13h19l17-3 18-1 34-4v21z" fill="#04a004" />
      <path d="M118 2036l12 5 10 2 25 1 25 3 15 2 10 5 7 4 6 4v-26zM252 2036h4v7h-3zM114 2092.500l11 1.500 15 1.500 20-3.500 25-5 20-4 15-2 15-3 10-4 7-6 4-3v49H114z" fill="#ee2525" />
      <path d="M12 2036.500h244" stroke="#c22" strokeWidth="1.500" strokeOpacity=".6" />
      {vol.map((v, i) => v !== 0 && <rect key={i} x={257.300 + i * 3.375} y={2114 - Math.abs(v)} width="2.500" height={Math.abs(v)} fill={v > 0 ? "#e02c2c" : "#0f970f"} />)}
      <Txt x={264} y={2069} w={87} s={30} fill="#999">63291</Txt>
    </svg>
  );
}

function MinuteSection() {
  return (
    <div className="h-[540px] border-b border-[#d4d4d4]">
      <MinuteChart />
      <div className="flex h-[58px] items-center pb-1 pl-[258px] text-[35.500px] leading-none font-medium text-[#333]">
        <span className="flex h-[46px] w-[132px] items-center justify-between rounded-[8px] border border-[#e0e3e8] bg-[#f6f7fa] pr-[9px] pl-[8px] text-[30.500px] text-[#262626] [-webkit-text-stroke:0px]">
          成交量<Caret />
        </span>
        <span className="ml-[4px] w-[168px]">146.8万</span>
        <span>分时量:7750</span>
        <Up />
      </div>
      <MinuteVolume />
      <div className="flex h-[57px] items-center pr-[11px] pl-[12px] text-[39px] leading-none font-medium tracking-[0.200px] text-[#999]">
        <span className="w-[244px]">09:15</span>
        <span>09:30</span>
        <span className="ml-auto">15:00</span>
      </div>
    </div>
  );
}

function BottomBar() {
  return (
    <div className="flex h-[108px] items-center bg-[#f6f7f9] text-[44px] leading-none font-medium text-[#e1590c]">
      <svg viewBox="0 0 20 34" className="ml-[96px] h-[34px] w-5"><path d="M17 2 3 17l14 15" fill="none" stroke={ORANGE} strokeWidth="3" /></svg>
      <span className="ml-[14px] w-[327px] [-webkit-text-stroke:0px]">前一天</span>
      <span className="[-webkit-text-stroke:0px]">后一天</span>
      <svg viewBox="0 0 20 34" className="ml-[15px] h-[34px] w-5"><path d="M3 2l14 15L3 32" fill="none" stroke={ORANGE} strokeWidth="3" /></svg>
      <span className="ml-[231px] font-normal text-[#666]">关闭</span>
    </div>
  );
}

function NavBar() {
  return (
    <div className="flex h-[116px] items-center bg-[#fbfbfb] pl-[284px]">
      <svg viewBox="0 0 52 52" className="size-[52px]"><rect x="4" y="4" width="42" height="44" rx="2" fill="none" stroke="#cfcfcf" strokeWidth="4" /></svg>
      <svg viewBox="0 0 52 52" className="ml-[179px] size-[52px]"><circle cx="25" cy="26" r="23" fill="none" stroke="#cfcfcf" strokeWidth="4" /></svg>
      <svg viewBox="0 0 52 52" className="ml-[178px] size-[52px]"><path d="M41.500 4v44L5 26z" fill="none" stroke="#cfcfcf" strokeWidth="4" strokeLinejoin="round" /></svg>
    </div>
  );
}

export default function App() {
  return (
    <div className="h-[2400px] w-[1080px] overflow-hidden bg-white font-['Noto_Sans','Noto_Sans_CJK_SC',sans-serif] [-webkit-text-stroke:0.700px]">
      <StatusBar />
      <Header />
      <Quote />
      <Notice />
      <Tabs />
      <IndicatorRow />
      <div className="relative pt-px">
        <KChart />
        <VolumeSection />
        <span className="absolute top-[2px] left-[245px] h-[700px] w-[2px] bg-[#777]/60" />
      </div>
      <PanelHead />
      <MinuteSection />
      <BottomBar />
      <NavBar />
    </div>
  );
}
